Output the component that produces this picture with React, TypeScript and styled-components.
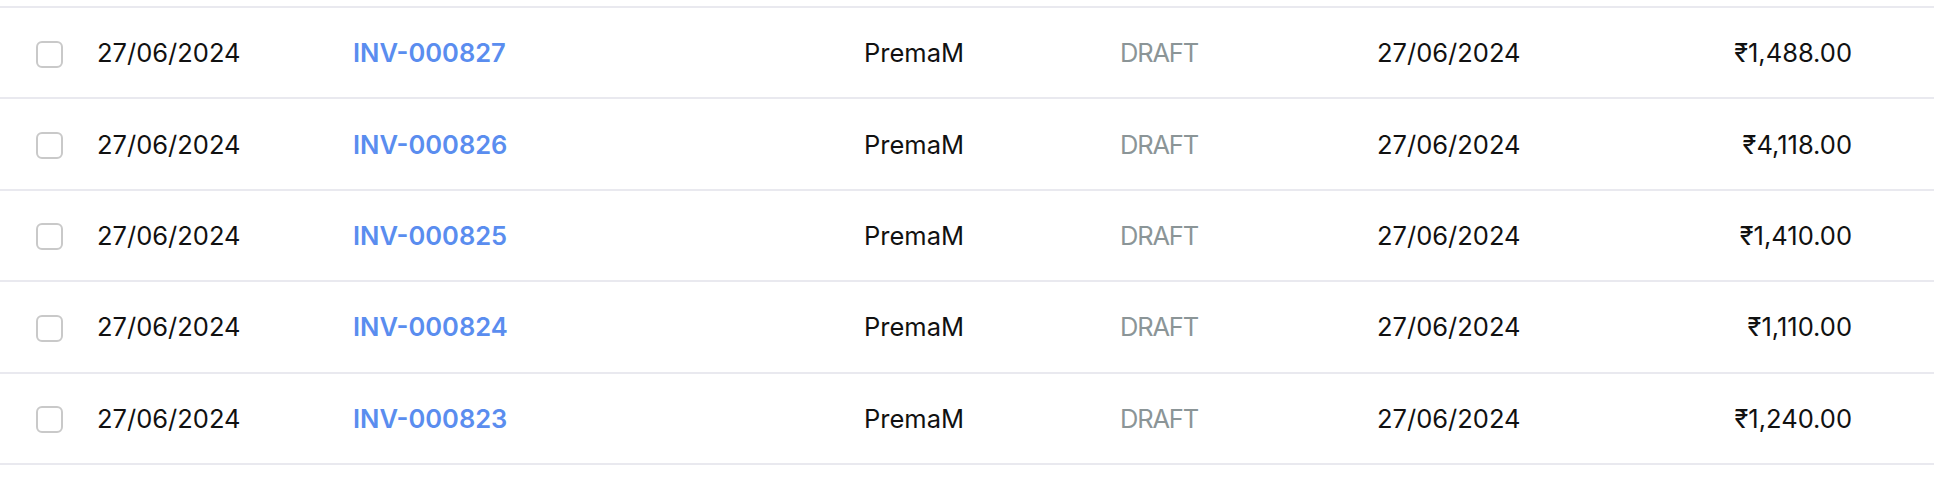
import React from "react";
import styled, { createGlobalStyle } from "styled-components";

const GlobalStyle = createGlobalStyle`
  html, body {
    margin: 0;
    padding: 0;
    background: #fff;
  }
  body {
    font-family: Inter, "Liberation Sans", sans-serif;
    color: #111;
  }
`;

type Invoice = {
  date: string;
  number: string;
  customer: string;
  status: string;
  due: string;
  amount: number;
};

const invoices: Invoice[] = [
  { date: "27/06/2024", number: "INV-000827", customer: "PremaM", status: "DRAFT", due: "27/06/2024", amount: 1488 },
  { date: "27/06/2024", number: "INV-000826", customer: "PremaM", status: "DRAFT", due: "27/06/2024", amount: 4118 },
  { date: "27/06/2024", number: "INV-000825", customer: "PremaM", status: "DRAFT", due: "27/06/2024", amount: 1410 },
  { date: "27/06/2024", number: "INV-000824", customer: "PremaM", status: "DRAFT", due: "27/06/2024", amount: 1110 },
  { date: "27/06/2024", number: "INV-000823", customer: "PremaM", status: "DRAFT", due: "27/06/2024", amount: 1240 },
];

const formatAmount = (n: number) =>
  "₹" + n.toLocaleString("en-IN", { minimumFractionDigits: 2, maximumFractionDigits: 2 });

export default function App() {
  return (
    <>
      <GlobalStyle />
      <Table>
        {invoices.map((inv) => (
          <Row key={inv.number}>
            <CheckCell>
              <Checkbox type="checkbox" />
            </CheckCell>
            <Cell>{inv.date}</Cell>
            <Cell>
              <InvoiceLink href="#">{inv.number}</InvoiceLink>
            </Cell>
            <Cell>{inv.customer}</Cell>
            <Status>{inv.status}</Status>
            <Cell>{inv.due}</Cell>
            <Cell $align="right">{formatAmount(inv.amount)}</Cell>
          </Row>
        ))}
      </Table>
    </>
  );
}

const Table = styled.div`
  margin-top: 6px;
  border-bottom: 2px solid #e9e9ef;
`;

const Row = styled.div`
  display: grid;
  grid-template-columns: 97px 256px 511px 256px 257px 1fr 200px;
  align-items: center;
  height: 89.4px;
  padding-right: 82px;
  border-top: 2px solid #e9e9ef;
  font-size: 25.5px;
`;

const CheckCell = styled.div`
  display: flex;
  align-items: center;
  padding-left: 36px;
  padding-top: 3px;
`;

const Checkbox = styled.input`
  appearance: none;
  margin: 0;
  width: 27px;
  height: 27px;
  box-sizing: border-box;
  border: 2px solid #c9c9c9;
  border-radius: 6px;
  background: #fff;
`;

const Cell = styled.div<{ $align?: "left" | "right" }>`
  text-align: ${(p) => p.$align ?? "left"};
  white-space: nowrap;
`;

const Status = styled(Cell)`
  color: #8b9597;
  letter-spacing: -1.2px;
`;

const InvoiceLink = styled.a`
  color: #5a8def;
  font-weight: 600;
  text-decoration: none;
`;
